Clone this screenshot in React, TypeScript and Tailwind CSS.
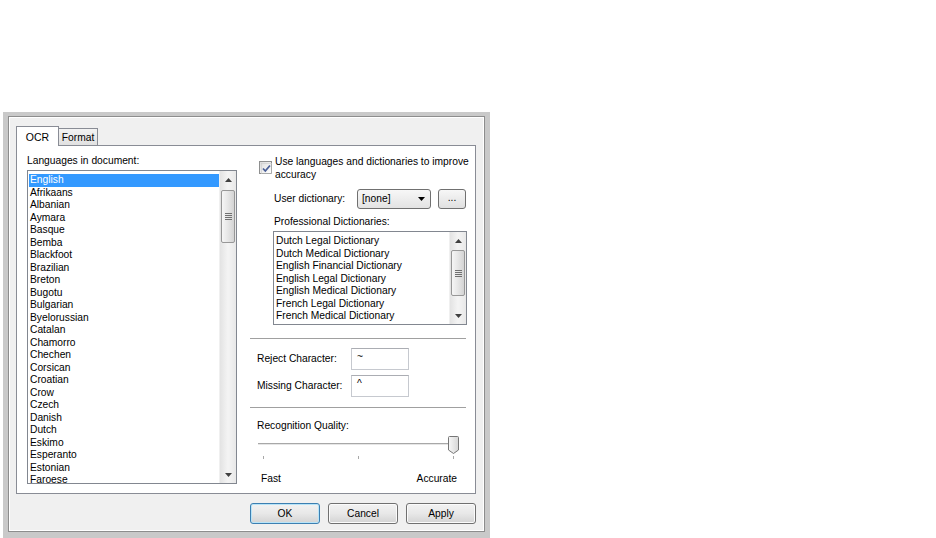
import React from 'react';

const LANGUAGES = [
  'English', 'Afrikaans', 'Albanian', 'Aymara', 'Basque', 'Bemba', 'Blackfoot', 'Brazilian',
  'Breton', 'Bugotu', 'Bulgarian', 'Byelorussian', 'Catalan', 'Chamorro', 'Chechen', 'Corsican',
  'Croatian', 'Crow', 'Czech', 'Danish', 'Dutch', 'Eskimo', 'Esperanto', 'Estonian', 'Faroese',
];

const DICTIONARIES = [
  'Dutch Legal Dictionary',
  'Dutch Medical Dictionary',
  'English Financial Dictionary',
  'English Legal Dictionary',
  'English Medical Dictionary',
  'French Legal Dictionary',
  'French Medical Dictionary',
  'German Legal Dictionary',
];

function ArrowUp() {
  return (
    <svg width="7" height="4" viewBox="0 0 7 4">
      <path d="M3.5 0L7 4H0z" fill="#404040" />
    </svg>
  );
}

function ArrowDown({ color = '#404040' }: { color?: string }) {
  return (
    <svg width="7" height="4" viewBox="0 0 7 4">
      <path d="M0 0H7L3.5 4z" fill={color} />
    </svg>
  );
}

// windows 7 style vertical scrollbar, thumb offset passed as a full class
function ScrollBar({ thumbClass }: { thumbClass: string }) {
  return (
    <div className="flex w-[17px] shrink-0 flex-col border-l border-[#f0f0f0] bg-gradient-to-r from-[#e3e3e3] via-[#f4f4f4] to-[#e8e8e8]">
      <div className="flex h-[17px] items-center justify-center">
        <ArrowUp />
      </div>
      <div
        className={`mx-px flex flex-col items-center justify-center gap-px rounded-[2px] border border-[#979797] bg-gradient-to-r from-[#f6f6f6] via-[#e6e6e6] to-[#d4d4d4] ${thumbClass}`}
      >
        <div className="h-px w-[7px] bg-[#707070]" />
        <div className="h-px w-[7px] bg-[#707070]" />
        <div className="h-px w-[7px] bg-[#707070]" />
        <div className="h-px w-[7px] bg-[#707070]" />
      </div>
      <div className="flex-1" />
      <div className="flex h-[17px] items-center justify-center">
        <ArrowDown />
      </div>
    </div>
  );
}

function CheckBox() {
  return (
    <div className="h-[13px] w-[13px] shrink-0 border border-[#8e8f8f] bg-gradient-to-br from-[#dcdcdc] to-white p-px">
      <svg width="11" height="11" viewBox="0 0 11 11">
        <rect x="0" y="0" width="11" height="11" fill="none" stroke="#c6c6c6" strokeWidth="1" />
        <path d="M2 5.5L4.3 8L9 2.5" fill="none" stroke="#4a5f97" strokeWidth="1.8" />
      </svg>
    </div>
  );
}

function Button({ label, isDefault }: { label: string; isDefault?: boolean }) {
  return (
    <div
      className={`flex h-[21px] w-[70px] items-center justify-center rounded-[3px] border bg-gradient-to-b from-[#f2f2f2] via-[#e8e8e8] to-[#d3d3d3] ${
        isDefault ? 'border-[#3c7fb1] shadow-[inset_0_0_0_1px_#b8e4f8]' : 'border-[#707070] shadow-[inset_0_0_0_1px_#fbfbfb]'
      }`}
    >
      {label}
    </div>
  );
}

function Slider() {
  return (
    <div className="relative ml-[8px] h-[24px] w-[200px]">
      <div className="absolute left-0 top-[7px] h-[2px] w-[197px] border-t border-[#a8a8a8] bg-[#e6e6e6]" />
      <div className="absolute left-[5px] top-[20px] h-[3px] w-px bg-[#a8a8a8]" />
      <div className="absolute left-[100px] top-[20px] h-[3px] w-px bg-[#a8a8a8]" />
      <div className="absolute left-[195px] top-[20px] h-[3px] w-px bg-[#a8a8a8]" />
      <svg className="absolute left-[190px] top-0" width="11" height="18" viewBox="0 0 11 18">
        <defs>
          <linearGradient id="thumbFill" x1="0" y1="0" x2="1" y2="0">
            <stop offset="0" stopColor="#f8f8f8" />
            <stop offset="1" stopColor="#d6d6d6" />
          </linearGradient>
        </defs>
        <path
          d="M0.5 1.5Q0.5 0.5 1.5 0.5H9.5Q10.5 0.5 10.5 1.5V14L5.5 17.5L0.5 14Z"
          fill="url(#thumbFill)"
          stroke="#767676"
        />
      </svg>
    </div>
  );
}

export default function App() {
  return (
    <div className="h-[538px] w-[936px] overflow-hidden bg-white pl-[3px] pt-[112px] font-['Liberation_Sans',Arial,sans-serif] text-[10.25px] text-black">
      {/* window frame */}
      <div className="w-[487px] bg-[#c9c9c9] px-[5px] pb-[6px] pt-[4px]">
        <div className="border border-[#8d8d8d]">
          <div className="border border-white bg-[#f0f0f0] pb-[6px] pl-[6px] pr-[7px] pt-[8px]">
            {/* tabs */}
            <div className="relative z-10 flex h-[19px] items-end">
              <div className="-mb-px flex h-[20px] w-[43px] items-start justify-center border-x border-t border-[#898c95] bg-white pt-[3px] text-[10.5px]">
                OCR
              </div>
              <div className="flex h-[17px] w-[39px] items-center justify-center border-r border-t border-[#898c95] bg-gradient-to-b from-[#f3f3f3] to-[#e1e1e1] pt-px">
                Format
              </div>
            </div>

            {/* tab panel */}
            <div className="flex h-[349px] border border-[#898c95] bg-white pl-[10px]">
              {/* left column */}
              <div className="flex w-[210px] flex-col pt-[9px]">
                <div className="h-[12px] leading-[12px]">Languages in document:</div>
                <div className="mt-[3px] flex h-[314px] border border-[#828790]">
                  <div className="flex-1 overflow-hidden pl-px pt-[3px]">
                    {LANGUAGES.map((lang, i) => (
                      <div
                        key={lang}
                        className={`h-[12.5px] pl-px leading-[12.5px] ${i === 0 ? 'bg-[#3399ff] text-white' : ''}`}
                      >
                        {lang}
                      </div>
                    ))}
                  </div>
                  <ScrollBar thumbClass="mt-[2px] h-[53px]" />
                </div>
              </div>

              {/* right column */}
              <div className="ml-[13px] flex w-[216px] flex-col pt-[9px]">
                <div className="flex h-[26px] items-start pl-[9px]">
                  <div className="mt-[6px]">
                    <CheckBox />
                  </div>
                  <div className="ml-[3px] whitespace-nowrap leading-[13px]">
                    Use languages and dictionaries to improve
                    <br />
                    accuracy
                  </div>
                </div>

                <div className="mt-[8px] flex h-[20px] items-center pl-[24px]">
                  <div className="w-[83px]">User dictionary:</div>
                  <div className="flex h-[20px] w-[74px] items-center justify-between rounded-[3px] border border-[#707070] bg-gradient-to-b from-[#f7f7f7] to-[#e3e3e3] pl-[4px] pr-[5px]">
                    <span>[none]</span>
                    <ArrowDown color="#000000" />
                  </div>
                  <div className="ml-[7px] flex h-[20px] w-[28px] items-center justify-center rounded-[3px] border border-[#707070] bg-gradient-to-b from-[#f7f7f7] to-[#e0e0e0] pb-[3px]">
                    ...
                  </div>
                </div>

                <div className="mt-[6px] h-[13px] pl-[24px] leading-[13px]">Professional Dictionaries:</div>

                <div className="ml-[23px] mt-[3px] flex h-[94px] w-[194px] border border-[#828790]">
                  <div className="flex-1 overflow-hidden pl-[2px] pt-[3px]">
                    {DICTIONARIES.map((d) => (
                      <div key={d} className="h-[12.5px] leading-[12.5px]">
                        {d}
                      </div>
                    ))}
                  </div>
                  <ScrollBar thumbClass="mt-[1px] h-[46px]" />
                </div>

                <div className="mt-[13px] h-px bg-[#a0a0a0]" />

                <div className="mt-[9px] flex h-[22px] items-center pl-[7px]">
                  <div className="w-[94px]">Reject Character:</div>
                  <div className="h-[22px] w-[58px] border border-[#c6c9cf] border-t-[#abadb3] pl-[5px] pt-[2px] leading-[12px]">
                    ~
                  </div>
                </div>

                <div className="mt-[5px] flex h-[22px] items-center pl-[7px]">
                  <div className="w-[94px]">Missing Character:</div>
                  <div className="h-[22px] w-[58px] border border-[#c6c9cf] border-t-[#abadb3] pl-[5px] pt-[2px] leading-[12px]">
                    ^
                  </div>
                </div>

                <div className="mt-[10px] h-px bg-[#a0a0a0]" />

                <div className="mt-[11px] h-[13px] pl-[7px] leading-[13px]">Recognition Quality:</div>

                <div className="mt-[4px]">
                  <Slider />
                </div>

                <div className="mt-[12px] flex h-[13px] justify-between pl-[11px] pr-[9px] leading-[13px]">
                  <span>Fast</span>
                  <span>Accurate</span>
                </div>
              </div>
            </div>

            {/* buttons */}
            <div className="mt-[9px] flex justify-end gap-[8px]">
              <Button label="OK" isDefault />
              <Button label="Cancel" />
              <Button label="Apply" />
            </div>
          </div>
        </div>
      </div>
    </div>
  );
}
